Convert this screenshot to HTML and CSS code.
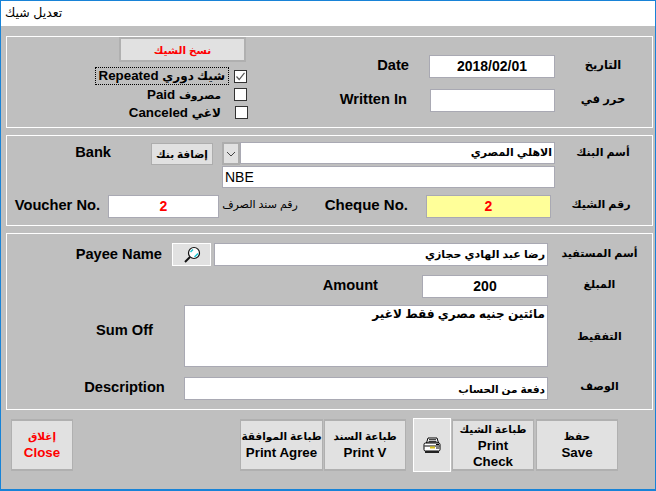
FILE: index.html
```html
<!DOCTYPE html>
<html lang="ar">
<head>
    <meta charset="UTF-8">
    <title>تعديل شيك</title>
    <link rel="stylesheet" href="styles.css">
</head>
<body>
    <div class="window">
        <div class="titlebar">تعديل شيك</div>

        <!-- Date and state -->
        <div class="frame frame-top">
            <div class="state-col">
                <button class="btn copy-btn">نسخ الشيك</button>
                <div class="check-row first">
                    <span class="check-text focused" dir="rtl"><span class="ar-small">شيك دوري</span> Repeated</span>
                    <span class="check">
                        <svg width="11" height="11" viewBox="0 0 11 11"><path d="M1.5 5.5 L4.2 8.5 L9.5 1.8" fill="none" stroke="#555" stroke-width="1.2"/></svg>
                    </span>
                </div>
                <div class="check-row">
                    <span class="check-text" dir="rtl"><span class="ar-tiny">مصروف</span> Paid</span>
                    <span class="check"></span>
                </div>
                <div class="check-row">
                    <span class="check-text" dir="rtl"><span class="ar-small">لاغي</span> Canceled</span>
                    <span class="check last"></span>
                </div>
            </div>
            <div class="date-col">
                <div class="row date-row">
                    <label class="en date-label">Date</label>
                    <input class="field date-field center" type="text" value="2018/02/01">
                    <label class="ar date-ar">التاريخ</label>
                </div>
                <div class="row written-row">
                    <label class="en written-label">Written In</label>
                    <input class="field written-field" type="text">
                    <label class="ar date-ar">حرر في</label>
                </div>
            </div>
        </div>

        <!-- Bank and numbers -->
        <div class="frame frame-bank">
            <div class="bank-row">
                <label class="en bank-label">Bank</label>
                <button class="btn add-bank">إضافة بنك</button>
                <div class="bank-fields">
                    <div class="combo">
                        <span class="combo-arrow">
                            <svg width="10" height="6" viewBox="0 0 10 6"><path d="M1 1 L5 5 L9 1" fill="none" stroke="#444" stroke-width="1"/></svg>
                        </span>
                        <input class="field combo-field" dir="rtl" type="text" value="الاهلي المصري">
                    </div>
                    <input class="field nbe-field" type="text" value="NBE">
                </div>
                <label class="ar bank-ar">أسم البنك</label>
            </div>
            <div class="row number-row">
                <label class="en voucher-label">Voucher No.</label>
                <input class="field voucher-field center red" type="text" value="2">
                <label class="ar voucher-ar">رقم سند الصرف</label>
                <label class="en cheque-label">Cheque No.</label>
                <input class="field cheque-field center red" type="text" value="2">
                <label class="ar cheque-ar">رقم الشيك</label>
            </div>
        </div>

        <!-- Payee -->
        <div class="frame frame-payee">
            <div class="row payee-row">
                <label class="en payee-label">Payee Name</label>
                <button class="btn lookup">
                    <svg width="20" height="18" viewBox="0 0 20 18">
                        <circle cx="12" cy="7" r="5.5" fill="#fff" stroke="#111" stroke-width="1.2"/>
                        <path d="M8.5 6 L11 3.5 M12.5 11 L16 7.5" stroke="#19c5d0" stroke-width="1.5"/>
                        <path d="M8 11 L3 16" stroke="#111" stroke-width="2"/>
                    </svg>
                </button>
                <input class="field payee-field" dir="rtl" type="text" value="رضا عبد الهادي حجازي">
                <label class="ar payee-ar">أسم المستفيد</label>
            </div>
            <div class="row amount-row">
                <label class="en amount-label">Amount</label>
                <input class="field amount-field center" type="text" value="200">
                <label class="ar payee-ar">المبلغ</label>
            </div>
            <div class="row sum-row">
                <label class="en wide-label">Sum Off</label>
                <textarea class="field sum-field" dir="rtl">مائتين جنيه مصري فقط لاغير</textarea>
                <label class="ar payee-ar">التفقيط</label>
            </div>
            <div class="row desc-row">
                <label class="en wide-label">Description</label>
                <input class="field desc-field" dir="rtl" type="text" value="دفعة من الحساب">
                <label class="ar payee-ar">الوصف</label>
            </div>
        </div>

        <!-- Actions -->
        <div class="footer">
            <button class="btn action close-btn"><span class="ar-btn">إغلاق</span>Close</button>
            <button class="btn action agree-btn"><span class="ar-btn">طباعة الموافقة</span>Print Agree</button>
            <button class="btn action v-btn"><span class="ar-btn">طباعة السند</span>Print V</button>
            <button class="btn printer-btn">
                <svg width="18" height="17" viewBox="0 0 18 17">
                    <path d="M5 1 H14 L15.5 6 H3.5 Z" fill="#fff" stroke="#000"/>
                    <path d="M6 2.7 H13 M5.5 4.4 H13.5" stroke="#000" stroke-width="0.9"/>
                    <rect x="1" y="6" width="16" height="8" rx="1.5" fill="#fff" stroke="#000"/>
                    <path d="M1.5 9 H16.5" stroke="#000"/>
                    <rect x="7" y="9.5" width="5" height="2" fill="#d9c21a"/>
                    <path d="M2 14 H16 V16 H2 Z" fill="#222"/>
                    <path d="M13 7.5 H16 M13 11 H16" stroke="#000"/>
                </svg>
            </button>
            <button class="btn action check-btn"><span class="ar-btn">طباعة الشيك</span>Print<br>Check</button>
            <button class="btn action save-btn"><span class="ar-btn">حفظ</span>Save</button>
        </div>
    </div>
</body>
</html>
```

FILE: styles.css
```css
/* General Styles */
* {
    box-sizing: border-box;
}
body {
    margin: 0;
    font-family: "Liberation Sans", "DejaVu Sans", sans-serif;
    color: #000;
}
.window {
    width: 656px;
    height: 491px;
    background: #bfbfbf;
    border: 1px solid #1883d7;
    border-bottom-width: 2px;
    overflow: hidden;
}
.titlebar {
    height: 25px;
    background: #fff;
    padding: 3px 4px 0;
    font-size: 12.5px;
    line-height: 18px;
}
.frame {
    width: 647px;
    margin: 7px 0 0 5px;
    border: 1px solid #fff;
}
.row {
    display: flex;
    align-items: center;
}

/* Labels */
.en {
    font-size: 14.67px;
    font-weight: bold;
    text-align: right;
    white-space: nowrap;
}
.ar {
    font-size: 11px;
    font-weight: bold;
    text-align: center;
    white-space: nowrap;
}
.row .en,
.row .ar {
    padding-bottom: 4px;
}
.ar-small {
    font-size: 12px;
}
.ar-tiny {
    font-size: 10.5px;
}

/* Input and Button Styles */
.field {
    height: 23px;
    margin: 0;
    padding: 1px 2px;
    border: 1px solid #a9a9b3;
    border-radius: 0;
    background: #fff;
    font-family: inherit;
    font-size: 11px;
    font-weight: bold;
    color: #000;
    outline: none;
}
.center {
    padding-bottom: 3px;
    text-align: center;
    font-size: 14px;
}
.red {
    color: #f00;
}
.btn {
    margin: 0;
    padding: 0;
    border: 1px solid #adadad;
    background: #e1e1e1;
    font-family: inherit;
    font-weight: bold;
    color: #000;
}

/* Top frame */
.frame-top {
    display: flex;
    height: 92px;
    margin-top: 10px;
}
.state-col {
    width: 151px;
    margin-left: 89px;
}
.copy-btn {
    display: block;
    width: 127px;
    height: 25px;
    margin-left: 23px;
    color: #f00;
    font-size: 10.5px;
    border-width: 2px;
    border-color: #b0b0b0;
}
.check-row {
    display: flex;
    justify-content: flex-end;
    align-items: center;
    height: 18px;
}
.check-row.first {
    margin-top: 5px;
}
.check-text {
    padding: 2px 3px 0;
    margin-right: 9px;
    font-size: 13.33px;
    font-weight: bold;
    line-height: 16px;
    white-space: nowrap;
    border: 1px solid transparent;
}
.check-text.focused {
    padding-top: 0;
    border: 1px dotted #000;
    margin-right: 5px;
}
.check {
    width: 13px;
    height: 13px;
    background: #fff;
    border: 1px solid #333;
    display: flex;
    align-items: center;
    justify-content: center;
}
.check.last {
    position: relative;
    left: 1px;
}
.date-col {
    width: 404px;
    padding-top: 18px;
}
.date-label {
    width: 162px;
}
.date-field {
    width: 126px;
    margin-left: 20px;
}
.date-ar {
    width: 96px;
    font-size: 11.5px;
}
.written-row {
    margin-top: 11px;
}
.written-label {
    width: 160px;
}
.written-field {
    width: 125px;
    margin-left: 23px;
}

/* Bank frame */
.frame-bank {
    height: 91px;
}
.bank-row {
    display: flex;
    align-items: flex-start;
    padding-top: 6px;
}
.bank-label {
    width: 36px;
    margin-left: 68px;
    line-height: 20px;
}
.add-bank {
    width: 62px;
    height: 22px;
    margin: 1px 0 0 40px;
    font-size: 10.5px;
}
.bank-fields {
    width: 333px;
    margin-left: 9px;
}
.combo {
    display: flex;
    height: 23px;
}
.combo-arrow {
    width: 18px;
    height: 23px;
    background: #e1e1e1;
    border: 2px solid #adadad;
    display: flex;
    align-items: center;
    justify-content: center;
}
.combo-field {
    width: 315px;
    height: 22px;
    padding-bottom: 3px;
}
.nbe-field {
    display: block;
    width: 333px;
    height: 22px;
    margin-top: 1px;
    font-size: 14px;
    font-weight: normal;
}
.bank-ar {
    width: 96px;
    line-height: 20px;
}
.number-row {
    margin-top: 7px;
}
.voucher-label {
    width: 93px;
}
.voucher-field {
    width: 111px;
    margin-left: 8px;
}
.voucher-ar {
    width: 80px;
    margin-left: 1px;
    font-size: 11px;
    font-weight: normal;
}
.cheque-label {
    width: 108px;
    font-size: 15px;
}
.cheque-field {
    width: 125px;
    margin-left: 18px;
    background: #ffff99;
}
.cheque-ar {
    width: 100px;
}

/* Payee frame */
.frame-payee {
    height: 177px;
    padding-top: 9px;
}
.row .payee-label {
    width: 155px;
    padding-bottom: 1px;
}
.lookup {
    width: 39px;
    height: 23px;
    margin-left: 10px;
    border: 1px solid #fff;
    display: flex;
    align-items: center;
    justify-content: center;
}
.payee-field {
    width: 334px;
    margin-left: 3px;
}
.payee-ar {
    width: 103px;
}
.payee-row .payee-ar {
    padding-bottom: 2px;
}
.amount-row {
    margin-top: 9px;
}
.amount-label {
    width: 371px;
}
.amount-field {
    width: 126px;
    margin-left: 44px;
}
.sum-row {
    margin-top: 7px;
}
.wide-label {
    width: 177px;
    padding-left: 58px;
    text-align: center;
}
.sum-row .wide-label {
    padding-bottom: 12px;
}
.sum-row .payee-ar {
    padding-bottom: 0;
}
.sum-field {
    width: 364px;
    height: 62px;
    font-size: 12px;
    resize: none;
}
.desc-row {
    margin-top: 10px;
}
.desc-field {
    width: 364px;
    font-size: 10.5px;
}

/* Footer buttons */
.footer {
    display: flex;
    align-items: center;
    height: 54px;
    margin-top: 8px;
}
.action {
    height: 52px;
    padding-bottom: 2px;
    font-size: 13.33px;
    line-height: 16px;
    text-align: center;
    border-width: 2px 1px;
    border-color: #b0b0b0;
}
.ar-btn {
    display: block;
    font-size: 10.5px;
    line-height: 17px;
}
.close-btn {
    width: 62px;
    margin-left: 10px;
    color: #f00;
}
.agree-btn {
    width: 83px;
    margin-left: 167px;
}
.v-btn {
    width: 82px;
    margin-left: 1px;
}
.printer-btn {
    width: 38px;
    height: 54px;
    margin-left: 7px;
    border-color: #fff;
    display: flex;
    align-items: center;
    justify-content: center;
}
.check-btn {
    width: 82px;
    margin-left: 1px;
    padding-bottom: 0;
}
.save-btn {
    width: 82px;
    margin-left: 2px;
}
```
